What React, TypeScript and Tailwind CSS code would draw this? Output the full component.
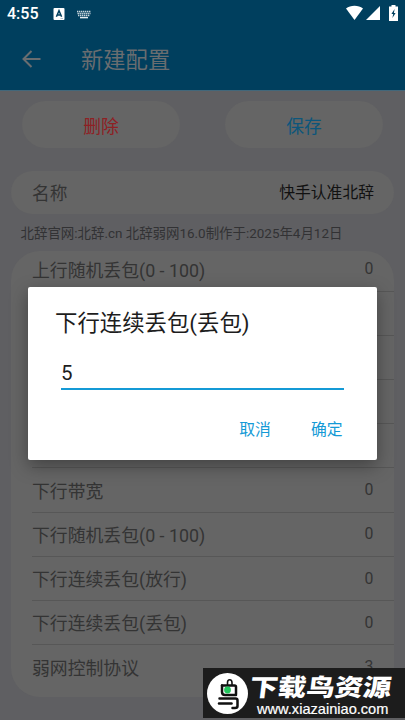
import React from 'react';

const rows = [
  { label: '上行随机丢包(0 - 100)', value: '0' },
  { label: '上行连续丢包(放行)', value: '0' },
  { label: '上行连续丢包(丢包)', value: '0' },
  { label: '上行延时', value: '0' },
  { label: '下行延时', value: '0' },
  { label: '下行带宽', value: '0' },
  { label: '下行随机丢包(0 - 100)', value: '0' },
  { label: '下行连续丢包(放行)', value: '0' },
  { label: '下行连续丢包(丢包)', value: '0' },
  { label: '弱网控制协议', value: '3' },
];

const StatusBar = () => (
  <div className="flex h-7 items-center pl-[7px] pr-[7px] text-white">
    <span className="w-[46px] text-[16px] font-medium leading-7">4:55</span>
    <svg className="h-3 w-3" viewBox="0 0 12 12">
      <rect x="0.5" y="0" width="11" height="12" rx="1" fill="#fff" />
      <path d="M3.4 8.8 6 2.6l2.6 6.2M4.3 7h3.4" fill="none" stroke="#003f5e" strokeWidth="1.5" />
      <path d="M7.5 10.5h2.5" stroke="#7c9bad" strokeWidth="0.6" />
    </svg>
    <svg className="ml-3 h-[9px] w-[14px]" viewBox="0 0 14 9">
      <path d="M0 1.5h14M0.5 3.5h13M1 5.5h12" fill="none" stroke="#c9d6dd" strokeWidth="1.5" strokeDasharray="1.4 0.6" />
      <path d="M3 7.6h8" stroke="#e6edf1" strokeWidth="1.5" />
    </svg>
    <div className="ml-auto flex items-center">
      <svg className="mt-[-3px] h-[15px] w-[17px]" viewBox="0 0 17 15">
        <path d="M8.5 15 0 3.6C2.4 1.8 5.2.8 8.5.8s6.1 1 8.5 2.8z" fill="#fff" />
      </svg>
      <svg className="ml-[3px] mt-[-2px] h-[14px] w-[14px]" viewBox="0 0 14 14">
        <path d="M14 0v14H0z" fill="#fff" />
      </svg>
      <svg className="ml-[9px] mt-[-2px] h-4 w-[9px]" viewBox="0 0 9 16">
        <path d="M2.5 0h4v1.5H9V16H0V1.5h2.5z" fill="#fff" />
        <path d="M5.6 4 2.4 9h1.8l-.8 4L6.6 8H4.9z" fill="#003f5e" />
      </svg>
    </div>
  </div>
);

const Watermark = () => (
  <div className="absolute left-[203px] top-[668px] flex h-[50px] w-[202px] bg-[#1c1c1c] text-white">
    <svg className="ml-1 mt-[5px] h-[41px] w-[41px] shrink-0" viewBox="0 0 41 41">
      <circle cx="20.5" cy="20.5" r="20.5" fill="#fff" />
      <g fill="none" stroke="#111" strokeWidth="2.5" strokeLinecap="round" strokeLinejoin="round">
        <path d="M20.5 12V9.500q0-2.700 2.200-2.700 2.300 0 2.300 3V12" strokeWidth="1.6" />
        <path d="M15 12.5h12.500q1.500 0 1.500 1.500v7" />
        <path d="M15 12.5v6.500q0 3 3 3h11" />
        <path d="M12.5 25.5h16q2 0 2 2v5.500q0 2-2.500 2h-2.500" />
        <path d="M12 30.5h12.500" />
      </g>
      <circle cx="20.5" cy="17" r="3.4" fill="#22c75d" />
    </svg>
    <div className="ml-[2px] pt-[4px]">
      <div className="h-[28px] origin-left scale-x-[1.18] skew-x-[-6deg] whitespace-nowrap text-[24px] font-black leading-[28px] [font-family:'Noto_Sans_CJK_SC',sans-serif]">下载鸟资源</div>
      <div className="ml-[7px] whitespace-nowrap text-[14.6px] leading-[18px] [font-family:'Liberation_Sans',sans-serif] [-webkit-text-stroke:0.2px_white]">www.xiazainiao.com</div>
    </div>
  </div>
);

const App = () => {
  return (
    <div className="relative h-[720px] w-[405px] overflow-hidden bg-[#5f5f62] [font-family:Roboto,'Noto_Sans_CJK_SC',sans-serif]">
      {/* Header */}
      <header className="h-[91px] border-b border-[#42677a] bg-[#003f5e]">
        <StatusBar />
        <div className="flex h-[62px] items-center pl-[22px] text-[#696d70]">
          <svg className="h-[18px] w-[19px]" viewBox="0 0 19 18" fill="none" stroke="currentColor" strokeWidth="2">
            <path d="M18.5 9H2M9.5 1 1.5 9l8 8" />
          </svg>
          <h1 className="ml-10 pt-px text-[22.3px] leading-8">新建配置</h1>
        </div>
      </header>

      {/* Actions */}
      <div className="flex justify-between px-[22px] pt-[10px] text-[17.8px]">
        <button className="h-[47px] w-[158px] rounded-full bg-[#656565] pt-[5px] text-[#8f2023]">删除</button>
        <button className="h-[47px] w-[158px] rounded-full bg-[#656565] pt-[5px] text-[#0c567b]">保存</button>
      </div>

      <div className="mx-[11px] mt-[23px] flex h-[43px] items-center justify-between rounded-full bg-[#656565] pl-[21px] pr-5">
        <span className="pt-[3px] text-[17.7px] text-[#343434]">名称</span>
        <span className="pt-px text-[15.8px] text-[#111]">快手认准北辞</span>
      </div>

      <p className="mt-[9px] h-[20px] whitespace-nowrap pl-[20.5px] text-[13.45px] leading-[22px] text-[#323234]">
        北辞官网:北辞.cn 北辞弱网16.0制作于:2025年4月12日
      </p>

      {/* Settings list */}
      <div className="mx-[11px] mt-[8px] h-[446px] overflow-hidden rounded-[29px] bg-[#656565] pl-[21px]">
        <div className="mt-[-3.5px]">
          {rows.map((row, i) => (
            <div
              key={i}
              className="flex h-[44.2px] items-center justify-between border-b-[1.5px] border-[#575757] pr-[20.5px] text-[#343434] last:border-b-0"
            >
              <span className="pt-1 text-[17.85px]">{row.label}</span>
              <span className="text-[15.8px]">{row.value}</span>
            </div>
          ))}
        </div>
      </div>

      {/* Dialog */}
      <div className="absolute left-[28px] top-[287px] h-[173px] w-[348.5px] rounded-[2px] bg-white shadow-[0_6px_18px_rgba(0,0,0,0.35)]">
        <h2 className="h-[52px] pl-[27px] pt-[20px] text-[22.4px] leading-8 text-[#1d1d1d]">下行连续丢包(丢包)</h2>
        <div className="ml-[33px] mt-[18px] h-[33px] w-[282.5px] border-b-2 border-[#149ad6] text-[20.5px] leading-[32px] text-[#1d1d1d]">5</div>
        <div className="mr-[34px] mt-[26px] flex justify-end gap-10 text-[15.8px] leading-7 text-[#149ad6]">
          <button>取消</button>
          <button>确定</button>
        </div>
      </div>

      <Watermark />
    </div>
  );
};

export default App;
